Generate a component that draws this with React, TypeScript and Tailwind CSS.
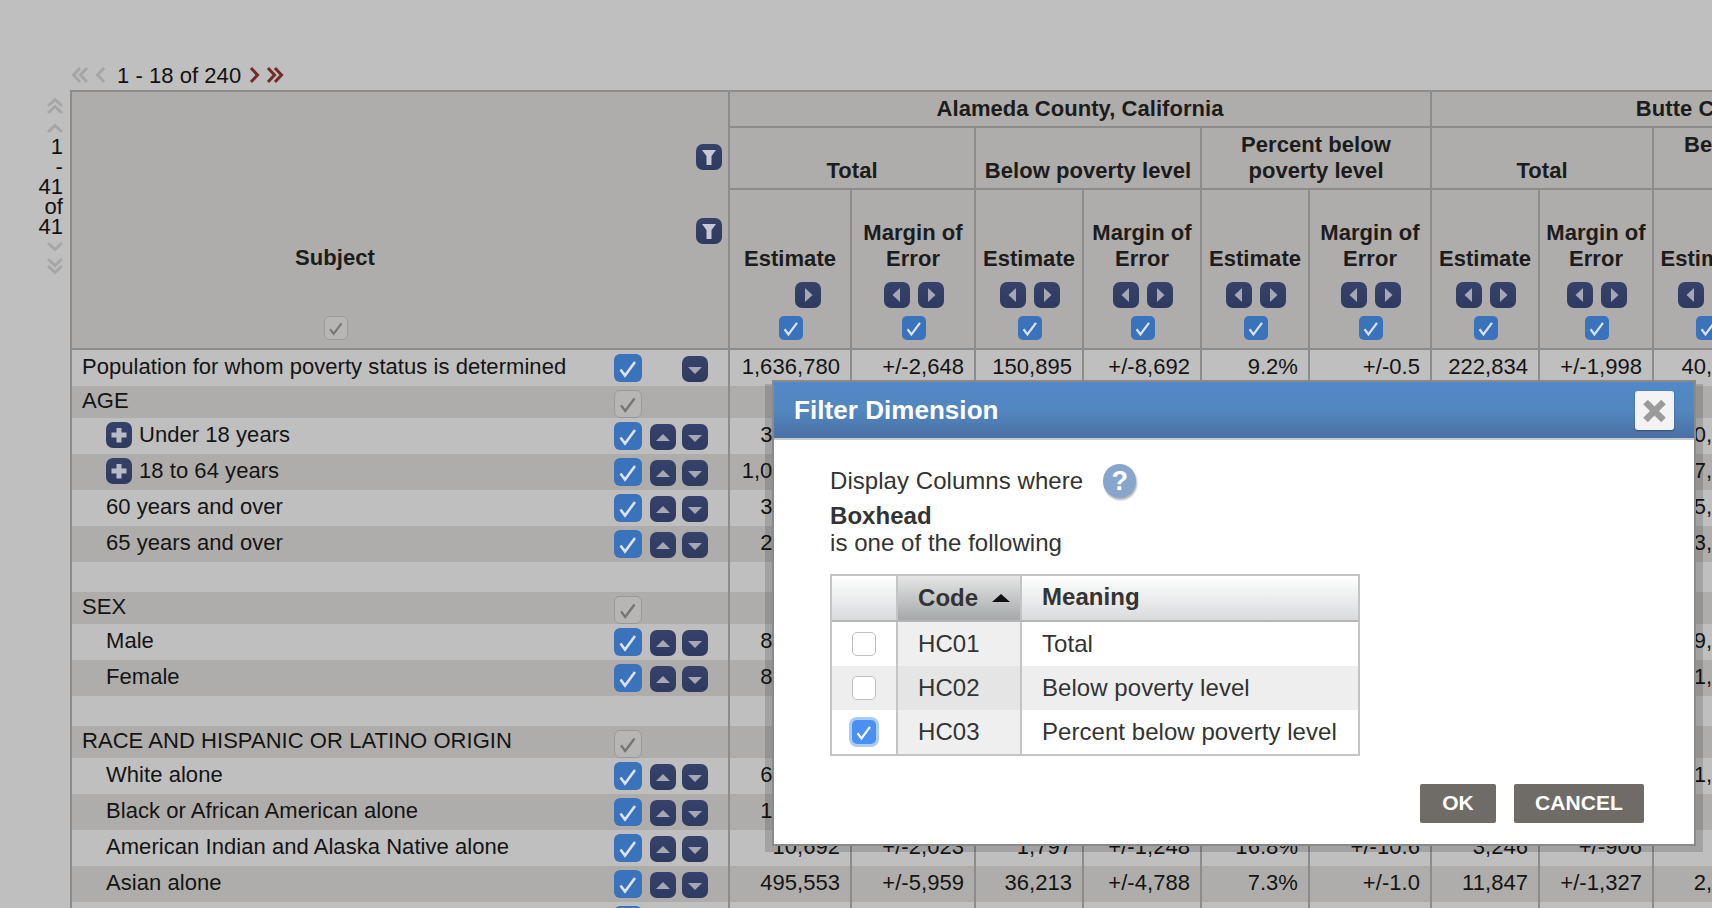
import React from "react";

const colClasses = ["w-[658px]","w-[122px]","w-[124px]","w-[108px]","w-[118px]","w-[108px]","w-[122px]","w-[108px]","w-[114px]","w-[107px]","w-[106px]","w-[108px]","w-[118px]"];
const line = "border-[#8c8c8c]";

function Tick({ className = "" }: { className?: string }) {
  return (
    <svg viewBox="0 0 28 28" className={className} fill="none">
      <path d="M6.5 15.5 L11 21.5 L21 8" stroke="currentColor" strokeWidth="2.6" />
    </svg>
  );
}
function BlueCheck({ small }: { small?: boolean }) {
  return (
    <div className={(small ? "w-[24px] h-[24px] rounded-[5px]" : "w-[28px] h-[28px] rounded-[6px]") + " bg-[#3b72bc] text-[#dbe3ef] shrink-0"}>
      <Tick className="w-full h-full" />
    </div>
  );
}
function GrayCheck({ small }: { small?: boolean }) {
  return (
    <div className={(small ? "w-[24px] h-[24px] rounded-[5px]" : "w-[28px] h-[28px] rounded-[6px]") + " bg-[#b7b6b4] border border-[#999999] text-[#757575] shrink-0"}>
      <Tick className="w-full h-full" />
    </div>
  );
}
function Btn({ points, fill = "#a4a8b5" }: { points: string; fill?: string }) {
  return (
    <div className="w-[26px] h-[26px] rounded-[7px] bg-linear-to-b from-[#36426a] to-[#2e3a5f] shrink-0">
      <svg viewBox="0 0 26 26" className="w-full h-full">
        <polygon points={points} fill={fill} className="blur-[0.7px]" />
      </svg>
    </div>
  );
}
const UP = "6,17 20,17 13,10";
const DOWN = "6,11 20,11 13,18";
const LEFT = "16,6 16,20 8.5,13";
const RIGHT = "10,6 10,20 17.5,13";
const FUNNEL = "6,6 20,6 15.5,12 15.5,21 10.5,21 10.5,12";
const PLUS = "10.5,6 15.5,6 15.5,10.5 20.5,10.5 20.5,15.5 15.5,15.5 15.5,20.5 10.5,20.5 10.5,15.5 5.5,15.5 5.5,10.5 10.5,10.5";

function Chev({ dir, double, red }: { dir: "l" | "r" | "u" | "d"; double?: boolean; red?: boolean }) {
  const color = red ? "#732a2a" : "#a6a6a6";
  const rot = { l: 0, r: 180, u: 90, d: 270 }[dir];
  return (
    <svg viewBox="0 0 18 18" className="w-[18px] h-[18px] shrink-0" fill="none" stroke={color} strokeWidth="3">
      <g transform={`rotate(${rot} 9 9)`}>
        {double ? (
          <>
            <path d="M9 2 L2.5 9 L9 16" />
            <path d="M16 2 L9.5 9 L16 16" />
          </>
        ) : (
          <path d="M13 2 L6.5 9 L13 16" />
        )}
      </g>
    </svg>
  );
}

type Row =
  | { kind: "blank" }
  | { kind: "head"; label: string }
  | { kind: "item"; label: string; indent?: boolean; plus?: boolean; noUp?: boolean; vals: string[] };

const rows: Row[] = [
  { kind: "item", label: "Population for whom poverty status is determined", noUp: true, vals: ["1,636,780","+/-2,648","150,895","+/-8,692","9.2%","+/-0.5","222,834","+/-1,998","40,127","+/-2,418","18.0%","+/-1.1"] },
  { kind: "head", label: "AGE" },
  { kind: "item", label: "Under 18 years", indent: true, plus: true, vals: ["344,912","+/-1,204","41,273","+/-3,515","12.0%","+/-1.0","44,108","+/-402","10,385","+/-1,306","23.5%","+/-2.9"] },
  { kind: "item", label: "18 to 64 years", indent: true, plus: true, vals: ["1,072,361","+/-1,580","94,882","+/-5,902","8.8%","+/-0.6","142,077","+/-1,215","27,406","+/-1,950","19.3%","+/-1.4"] },
  { kind: "item", label: "60 years and over", indent: true, vals: ["301,456","+/-1,012","24,330","+/-1,804","8.1%","+/-0.6","52,911","+/-712","15,228","+/-620","9.9%","+/-1.2"] },
  { kind: "item", label: "65 years and over", indent: true, vals: ["219,507","+/-640","14,740","+/-1,377","6.7%","+/-0.6","36,649","+/-318","13,336","+/-502","9.1%","+/-1.4"] },
  { kind: "blank" },
  { kind: "head", label: "SEX" },
  { kind: "item", label: "Male", indent: true, vals: ["804,512","+/-1,722","69,104","+/-4,610","8.6%","+/-0.6","108,764","+/-1,215","19,180","+/-1,520","17.6%","+/-1.4"] },
  { kind: "item", label: "Female", indent: true, vals: ["832,268","+/-1,640","81,791","+/-4,902","9.8%","+/-0.6","114,070","+/-1,120","21,947","+/-1,602","19.2%","+/-1.4"] },
  { kind: "blank" },
  { kind: "head", label: "RACE AND HISPANIC OR LATINO ORIGIN" },
  { kind: "item", label: "White alone", indent: true, vals: ["691,320","+/-2,914","46,218","+/-3,202","6.7%","+/-0.5","184,220","+/-1,604","31,045","+/-2,118","16.9%","+/-1.1"] },
  { kind: "item", label: "Black or African American alone", indent: true, vals: ["178,442","+/-1,801","37,606","+/-2,840","21.1%","+/-1.6","3,812","+/-410","412","+/-228","10.8%","+/-5.6"] },
  { kind: "item", label: "American Indian and Alaska Native alone", indent: true, vals: ["10,692","+/-2,023","1,797","+/-1,248","16.8%","+/-10.6","3,246","+/-906","326","+/-210","10.0%","+/-6.1"] },
  { kind: "item", label: "Asian alone", indent: true, vals: ["495,553","+/-5,959","36,213","+/-4,788","7.3%","+/-1.0","11,847","+/-1,327","2,640","+/-702","22.3%","+/-5.4"] },
  { kind: "item", label: "Some other race alone", indent: true, vals: ["","","","","","","","","","","",""] },
];

const topCell = `border-l-2 border-b-2 ${line} p-0 font-bold text-center`;
const subCols = ["r", "lr", "lr", "lr", "lr", "lr", "lr", "lr", "lr", "lr", "lr", "lr"];

function Header() {
  const groups: React.ReactNode[] = ["Total", "Below poverty level", "Percent below poverty level", "Total", <>Below poverty<br />level</>, "Percent below poverty level"];
  return (
    <thead className="bg-[#afadab] text-[#1c1c1c]">
      <tr>
        <td rowSpan={3} className={`border-l-2 border-t-2 border-b-2 ${line} p-0 align-top`}>
          <div className="flex h-[256px]">
            <div className="w-[526px] flex flex-col items-center justify-end pb-[8px]">
              <div className="font-bold leading-[26px]">Subject</div>
              <div className="mt-[45px] ml-[2px]"><GrayCheck small /></div>
            </div>
            <div className="flex-1 flex flex-col items-end pr-[6px] pt-[52px] gap-[48px]">
              <Btn points={FUNNEL} fill="#c6c9d1" />
              <Btn points={FUNNEL} fill="#c6c9d1" />
            </div>
          </div>
        </td>
        <td colSpan={6} className={`${topCell} border-t-2 h-[38px] leading-[32px]`}>Alameda County, California</td>
        <td colSpan={6} className={`${topCell} border-t-2 leading-[32px]`}>Butte County, California</td>
      </tr>
      <tr>
        {groups.map((t, i) => (
          <td key={i} colSpan={2} className={`${topCell} h-[62px] align-bottom leading-[26px] pb-[4px]`}>
            {t}
          </td>
        ))}
      </tr>
      <tr>
        {subCols.map((c, i) => (
          <td key={i} className={`${topCell} h-[160px] align-bottom`}>
            <div className="flex flex-col items-center pb-[8px]">
              <div className="leading-[26px] mt-[1px]">{i % 2 === 0 ? "Estimate" : <>Margin of<br />Error</>}</div>
              <div className="mt-[10px] ml-[2px] flex gap-[8px] justify-center">
                <div className={c === "r" ? "invisible" : ""}><Btn points={LEFT} /></div>
                <Btn points={RIGHT} />
              </div>
              <div className="mt-[8px] ml-[2px]"><BlueCheck small /></div>
            </div>
          </td>
        ))}
      </tr>
    </thead>
  );
}

function Body() {
  return (
    <tbody className="text-[#141414]">
      {rows.map((r, i) => {
        const band = i % 2 === 1 ? "bg-[#afadab]" : "bg-[#bfbfbf]";
        if (r.kind === "blank") {
          return (
            <tr key={i} className="bg-[#bfbfbf]">
              {colClasses.map((_, j) => <td key={j} className={`h-[30px] p-0 border-l-2 ${line}`} />)}
            </tr>
          );
        }
        if (r.kind === "head") {
          return (
            <tr key={i} className="bg-[#afadab]">
              <td className={`h-[32px] p-0 border-l-2 ${line} align-top`}>
                <div className="flex items-start">
                  <div className="pl-[10px] w-[542px] leading-[30px] whitespace-nowrap">{r.label}</div>
                  <div className="mt-[4px]"><GrayCheck /></div>
                </div>
              </td>
              {colClasses.slice(1).map((_, j) => <td key={j} className={`p-0 border-l-2 ${line}`} />)}
            </tr>
          );
        }
        return (
          <tr key={i} className={band}>
            <td className={`h-[36px] p-0 border-l-2 ${line} align-top`}>
              <div className="flex items-start">
                <div className={(r.indent ? "pl-[34px]" : "pl-[10px]") + " w-[542px] flex items-start whitespace-nowrap"}>
                  {r.plus && <div className="mt-[4px] mr-[7px]"><Btn points={PLUS} fill="#b9bcc6" /></div>}
                  <span className="leading-[33px]">{r.label}</span>
                </div>
                <div className="mt-[4px]"><BlueCheck /></div>
                <div className="mt-[6px] ml-[8px]">
                  {r.noUp ? <div className="w-[26px]" /> : <Btn points={UP} />}
                </div>
                <div className="mt-[6px] ml-[6px]"><Btn points={DOWN} /></div>
              </div>
            </td>
            {r.vals.map((v, j) => (
              <td key={j} className={`p-0 pr-[10px] border-l-2 ${line} text-right align-top leading-[33px] whitespace-nowrap`}>{v}</td>
            ))}
          </tr>
        );
      })}
    </tbody>
  );
}

function ModalCheck({ checked }: { checked?: boolean }) {
  if (checked) {
    return (
      <div className="w-[24px] h-[24px] rounded-[5px] bg-[#4a90f2] text-white ring-[3px] ring-[#a9ccf9]">
        <Tick className="w-full h-full" />
      </div>
    );
  }
  return <div className="w-[24px] h-[24px] rounded-[5px] bg-white border border-[#bdbdbd]" />;
}

function Modal() {
  const tableRows = [
    { code: "HC01", meaning: "Total", a: "bg-white", c: "bg-[#efefef]" },
    { code: "HC02", meaning: "Below poverty level", a: "bg-[#eeeeee]", c: "bg-[#e5e5e5]" },
    { code: "HC03", meaning: "Percent below poverty level", a: "bg-white", c: "bg-[#efefef]", checked: true },
  ];
  return (
    <div className="absolute left-[772px] top-[380px] w-[924px] h-[466px]">
      <div className="absolute -left-[7px] -right-[7px] top-[4px] -bottom-[6px] bg-black/15" />
      <div className="relative h-full border-2 border-[#8a8a8a] bg-white flex flex-col text-[#333333] text-[24px]">
        <div className="h-[56px] shrink-0 bg-linear-to-b from-[#5288c8] via-[#5287bf] to-[#4a70a5] flex items-center justify-between pl-[20px] pr-[20px]">
          <span className="text-white font-bold text-[26px] leading-[52px]">Filter Dimension</span>
          <div className="w-[39px] h-[39px] mt-[1px] rounded-[3px] bg-[#f3f3f3] shadow-[0_1px_2px_rgba(0,0,0,.35)] text-[#9b9b9b]">
            <svg viewBox="0 0 39 39" className="w-full h-full" fill="none" stroke="currentColor" strokeWidth="6.5">
              <path d="M10.5 11 L28.5 29 M28.5 11 L10.5 29" />
            </svg>
          </div>
        </div>
        <div className="h-[2px] bg-[#c9c9c9] shrink-0" />
        <div className="pl-[56px] pt-[23px] flex-1 flex flex-col">
          <div className="flex items-center h-[36px] leading-[36px]">
            <span>Display Columns where</span>
            <div className="ml-[20px] w-[33px] h-[34px] rounded-full bg-[#88a6cb] shadow-[1px_2px_2px_rgba(0,0,0,.3)] flex items-center justify-center text-white font-bold text-[27px] leading-[34px]">?</div>
          </div>
          <div className="font-bold leading-[28px] mt-[3px]">Boxhead</div>
          <div className="leading-[28px] mt-[-1px]">is one of the following</div>
          <div className="mt-[17px] w-[530px] border-2 border-[#c4c4c4]">
            <div className="flex h-[46px] border-b-2 border-[#b5b5b5] font-bold leading-[42px]">
              <div className="w-[66px] border-r-2 border-[#c4c4c4] bg-linear-to-b from-white to-[#d9dbdc]" />
              <div className="w-[124px] border-r-2 border-[#c4c4c4] bg-linear-to-b from-[#e6e6e6] to-[#a5a8aa] pl-[20px] flex items-center">
                <span>Code</span>
                <svg viewBox="0 0 18 8" className="w-[18px] h-[8px] ml-[14px]"><polygon points="0,8 18,8 9,0" fill="#111" /></svg>
              </div>
              <div className="flex-1 bg-linear-to-b from-white to-[#d9dbdc] pl-[20px]">Meaning</div>
            </div>
            {tableRows.map((t) => (
              <div key={t.code} className={`flex h-[44px] items-center leading-[44px] ${t.a}`}>
                <div className="w-[66px] h-full border-r-2 border-[#c4c4c4] flex items-center justify-center"><ModalCheck checked={t.checked} /></div>
                <div className={`w-[124px] h-full border-r-2 border-[#c4c4c4] pl-[20px] ${t.c}`}>{t.code}</div>
                <div className="flex-1 pl-[20px] whitespace-nowrap">{t.meaning}</div>
              </div>
            ))}
          </div>
          <div className="mt-[28px] flex justify-end gap-[18px] pr-[50px]">
            <div className="w-[76px] h-[39px] bg-[#6f6b66] rounded-[2px] text-white font-bold text-[21px] leading-[37px] text-center">OK</div>
            <div className="w-[130px] h-[39px] bg-[#6f6b66] rounded-[2px] text-white font-bold text-[21px] leading-[37px] text-center">CANCEL</div>
          </div>
        </div>
      </div>
    </div>
  );
}

export default function App() {
  return (
    <div className="relative w-[1712px] h-[908px] overflow-hidden bg-[#bfbfbf] text-[22px] tracking-[0.05px] text-[#111111] [font-family:'Liberation_Sans',Arial,sans-serif]">
      <div className="h-[90px] pl-[71px] flex items-end">
        <div className="flex items-center h-[28px]">
          <div className="mb-[2px]"><Chev dir="l" double /></div>
          <div className="ml-[2px] mb-[2px]"><Chev dir="l" /></div>
          <span className="ml-[8px] leading-[30px]">1 - 18 of 240</span>
          <div className="ml-[5px] mb-[3px]"><Chev dir="r" red /></div>
          <div className="ml-[2px] mb-[3px]"><Chev dir="r" double red /></div>
        </div>
      </div>
      <div className="flex items-start">
        <div className="w-[70px] shrink-0 pt-[7px] flex flex-col items-end pr-[6px]">
          <div className="w-[22px] flex flex-col items-center mr-[-2px]">
            <Chev dir="u" double />
            <div className="mt-[4px]"><Chev dir="u" /></div>
          </div>
          <div className="text-right leading-[20px] pr-[1px]">1<br />-<br />41<br />of<br />41</div>
          <div className="w-[22px] flex flex-col items-center mr-[-2px] mt-[1px]">
            <Chev dir="d" />
            <div className="mt-[1px]"><Chev dir="d" double /></div>
          </div>
        </div>
        <table className="table-fixed w-[2021px] border-separate border-spacing-0 shrink-0">
          <colgroup>
            {colClasses.map((c, i) => <col key={i} className={c} />)}
          </colgroup>
          <Header />
          <Body />
        </table>
      </div>
      <Modal />
    </div>
  );
}
